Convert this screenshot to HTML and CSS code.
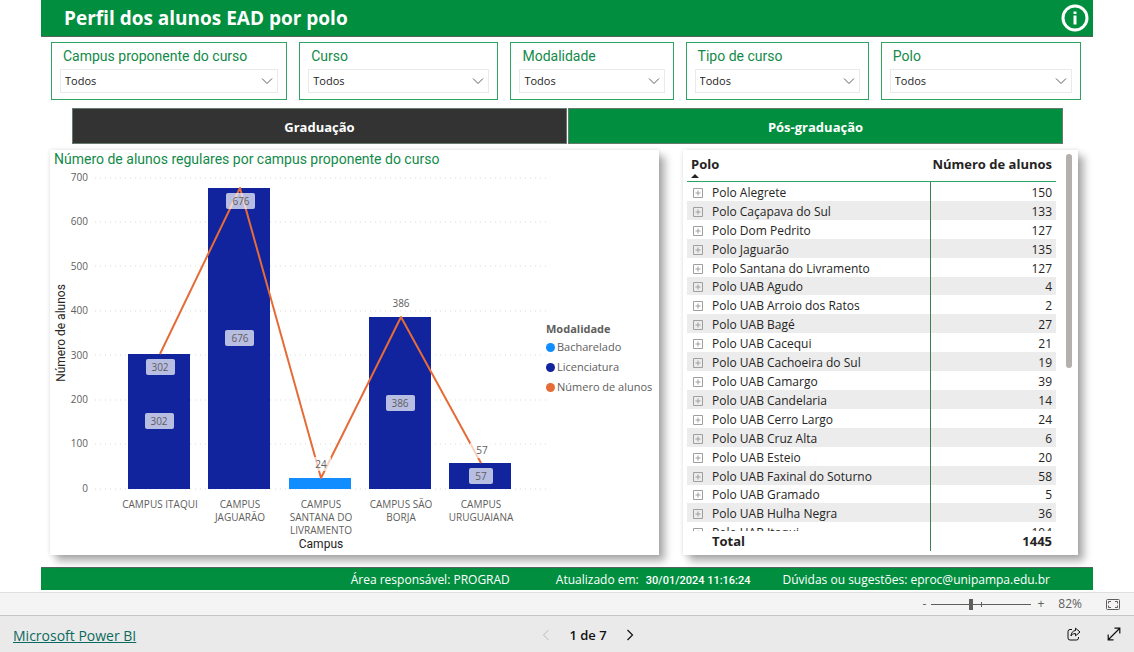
FILE: index.html
```html
<!DOCTYPE html>
<html lang="pt-BR">
<head>
<meta charset="utf-8">
<meta name="viewport" content="width=device-width, initial-scale=1">
<title>Perfil dos alunos EAD por polo</title>
<link rel="stylesheet" href="styles.css">
</head>
<body>
<svg class="sprite" aria-hidden="true">
  <symbol id="chevron" viewBox="0 0 12 8"><path d="M1 1.500 6 6.500 11 1.500" fill="none" stroke="currentColor"/></symbol>
  <symbol id="expand" viewBox="0 0 10 10"><path d="M.5 .5h9v9h-9zM2.500 5h5M5 2.500v5" fill="none" stroke="currentColor"/></symbol>
</svg>
<main class="report">
  <header class="report-header">
    <h1>Perfil dos alunos EAD por polo</h1>
    <button class="info" aria-label="Informações">
      <svg viewBox="0 0 28 28" width="28" height="28"><circle cx="14" cy="14" r="12" fill="none" stroke="#fff" stroke-width="3"/><path d="M12.500 7.500h3v2.500h-3zM12.500 11.500h3v9h-3z" fill="#fff"/></svg>
    </button>
  </header>

  <section class="filters">
    <div class="filter"><label for="campus">Campus proponente do curso</label><div class="pick"><select id="campus"><option>Todos</option></select><svg><use href="#chevron"/></svg></div></div>
    <div class="filter"><label for="curso">Curso</label><div class="pick"><select id="curso"><option>Todos</option></select><svg><use href="#chevron"/></svg></div></div>
    <div class="filter"><label for="modalidade">Modalidade</label><div class="pick"><select id="modalidade"><option>Todos</option></select><svg><use href="#chevron"/></svg></div></div>
    <div class="filter"><label for="tipo">Tipo de curso</label><div class="pick"><select id="tipo"><option>Todos</option></select><svg><use href="#chevron"/></svg></div></div>
    <div class="filter"><label for="polo">Polo</label><div class="pick"><select id="polo"><option>Todos</option></select><svg><use href="#chevron"/></svg></div></div>
  </section>

  <nav class="tabs">
    <button class="tab tab-current">Graduação</button>
    <button class="tab">Pós-graduação</button>
  </nav>

  <div class="panels">
    <section class="card chart-card">
      <h2>Número de alunos regulares por campus proponente do curso</h2>
      <div class="chart-body">
        <svg class="plot" viewBox="0 0 496 386" role="img" aria-label="Número de alunos por campus">
          <g class="grid">
            <path d="M45 10H498M45 54H498M45 98H498M45 143H498M45 187H498M45 232H498M45 276H498M45 321H498"/>
          </g>
          <g class="ticks">
            <text x="38" y="13">700</text><text x="38" y="57">600</text><text x="38" y="102">500</text><text x="38" y="146">400</text>
            <text x="38" y="191">300</text><text x="38" y="235">200</text><text x="38" y="279">100</text><text x="38" y="324">0</text>
          </g>
          <text class="axis-name" transform="translate(15 165) rotate(-90)">Número de alunos</text>
          <g class="bars">
            <rect x="78" y="186" width="62" height="135"/>
            <rect x="158" y="20" width="62" height="301"/>
            <rect class="bacharelado" x="239" y="310" width="62" height="11"/>
            <rect x="319" y="149" width="62" height="172"/>
            <rect x="399" y="295" width="62" height="26"/>
          </g>
          <path class="trend" d="M110 186 190 20 271 310 351 149 431 295"/>
          <g class="pills">
            <rect x="96" y="191" width="29" height="16" rx="2"/><rect x="95" y="245" width="29" height="16" rx="2"/>
            <rect x="176" y="25" width="29" height="16" rx="2"/><rect x="175" y="162" width="29" height="16" rx="2"/>
            <rect x="336" y="227" width="29" height="16" rx="2"/><rect x="419" y="300" width="24" height="16" rx="2"/>
            <rect x="261" y="289" width="20" height="14"/><rect x="420" y="275" width="22" height="15"/>
          </g>
          <g class="values">
            <text x="110" y="203">302</text><text x="109" y="257">302</text><text x="191" y="37">676</text><text x="190" y="174">676</text>
            <text x="271" y="300">24</text><text x="351" y="139">386</text><text x="350" y="239">386</text><text x="432" y="286">57</text><text x="431" y="312">57</text>
          </g>
          <g class="cats">
            <text x="110" y="340">CAMPUS ITAQUI</text>
            <text x="190" y="340">CAMPUS</text><text x="190" y="353">JAGUARÃO</text>
            <text x="271" y="340">CAMPUS</text><text x="271" y="353">SANTANA DO</text><text x="271" y="366">LIVRAMENTO</text>
            <text x="351" y="340">CAMPUS SÃO</text><text x="351" y="353">BORJA</text>
            <text x="431" y="340">CAMPUS</text><text x="431" y="353">URUGUAIANA</text>
          </g>
          <text class="axis-name" x="271" y="380">Campus</text>
        </svg>
        <div class="legend">
          <h3>Modalidade</h3>
          <ul>
            <li><i class="dot dot-bach"></i>Bacharelado</li>
            <li><i class="dot dot-lic"></i>Licenciatura</li>
            <li><i class="dot dot-num"></i>Número de alunos</li>
          </ul>
        </div>
      </div>
    </section>

    <section class="card table-card">
      <div class="table-view">
        <table>
          <thead><tr><th scope="col">Polo<span class="sort"></span></th><th scope="col">Número de alunos</th></tr></thead>
          <tbody>
            <tr><td><button aria-label="Expandir"><svg><use href="#expand"/></svg></button>Polo Alegrete</td><td>150</td></tr>
            <tr><td><button aria-label="Expandir"><svg><use href="#expand"/></svg></button>Polo Caçapava do Sul</td><td>133</td></tr>
            <tr><td><button aria-label="Expandir"><svg><use href="#expand"/></svg></button>Polo Dom Pedrito</td><td>127</td></tr>
            <tr><td><button aria-label="Expandir"><svg><use href="#expand"/></svg></button>Polo Jaguarão</td><td>135</td></tr>
            <tr><td><button aria-label="Expandir"><svg><use href="#expand"/></svg></button>Polo Santana do Livramento</td><td>127</td></tr>
            <tr><td><button aria-label="Expandir"><svg><use href="#expand"/></svg></button>Polo UAB Agudo</td><td>4</td></tr>
            <tr><td><button aria-label="Expandir"><svg><use href="#expand"/></svg></button>Polo UAB Arroio dos Ratos</td><td>2</td></tr>
            <tr><td><button aria-label="Expandir"><svg><use href="#expand"/></svg></button>Polo UAB Bagé</td><td>27</td></tr>
            <tr><td><button aria-label="Expandir"><svg><use href="#expand"/></svg></button>Polo UAB Cacequi</td><td>21</td></tr>
            <tr><td><button aria-label="Expandir"><svg><use href="#expand"/></svg></button>Polo UAB Cachoeira do Sul</td><td>19</td></tr>
            <tr><td><button aria-label="Expandir"><svg><use href="#expand"/></svg></button>Polo UAB Camargo</td><td>39</td></tr>
            <tr><td><button aria-label="Expandir"><svg><use href="#expand"/></svg></button>Polo UAB Candelaria</td><td>14</td></tr>
            <tr><td><button aria-label="Expandir"><svg><use href="#expand"/></svg></button>Polo UAB Cerro Largo</td><td>24</td></tr>
            <tr><td><button aria-label="Expandir"><svg><use href="#expand"/></svg></button>Polo UAB Cruz Alta</td><td>6</td></tr>
            <tr><td><button aria-label="Expandir"><svg><use href="#expand"/></svg></button>Polo UAB Esteio</td><td>20</td></tr>
            <tr><td><button aria-label="Expandir"><svg><use href="#expand"/></svg></button>Polo UAB Faxinal do Soturno</td><td>58</td></tr>
            <tr><td><button aria-label="Expandir"><svg><use href="#expand"/></svg></button>Polo UAB Gramado</td><td>5</td></tr>
            <tr><td><button aria-label="Expandir"><svg><use href="#expand"/></svg></button>Polo UAB Hulha Negra</td><td>36</td></tr>
            <tr><td><button aria-label="Expandir"><svg><use href="#expand"/></svg></button>Polo UAB Itaqui</td><td>104</td></tr>
          </tbody>
          <tfoot><tr><td>Total</td><td>1445</td></tr></tfoot>
        </table>
      </div>
      <div class="scrollbar"></div>
    </section>
  </div>

  <footer class="report-footer">
    <span>Área responsável: PROGRAD</span>
    <span class="updated">Atualizado em: <time datetime="2024-01-30T11:16:24">30/01/2024 11:16:24</time></span>
    <span>Dúvidas ou sugestões: eproc@unipampa.edu.br</span>
  </footer>
</main>

<div class="zoom-bar">
  <button aria-label="Reduzir">-</button>
  <div class="slider"><input type="range" min="10" max="190" value="80" aria-label="Zoom"></div>
  <button aria-label="Ampliar">+</button>
  <span class="percent">82%</span>
  <button class="fit" aria-label="Ajustar à página"><svg width="14" height="11" viewBox="0 0 14 11" fill="none" stroke="#605e5c"><rect x=".5" y=".5" width="13" height="10" rx="1"/><path d="M5 2.500H2.500V4.500M9 2.500h2.500V4.500M5 8.500H2.500V6.500M9 8.500h2.500V6.500"/></svg></button>
</div>

<div class="nav-bar">
  <a href="#">Microsoft Power BI</a>
  <div class="pager">
    <button aria-label="Página anterior" disabled><svg width="8" height="12" viewBox="0 0 8 12"><path d="M6.500 1 1.500 6l5 5" fill="none" stroke="currentColor"/></svg></button>
    <span>1 de 7</span>
    <button aria-label="Próxima página"><svg width="8" height="12" viewBox="0 0 8 12"><path d="M1.500 1l5 5-5 5" fill="none" stroke="currentColor" stroke-width="1.200"/></svg></button>
  </div>
  <div class="actions">
    <button aria-label="Compartilhar"><svg width="14" height="14" viewBox="0 0 14 14" fill="none" stroke="#111"><path d="M5 2.500H3a2 2 0 0 0-2 2V11a2 2 0 0 0 2 2h6.500a2 2 0 0 0 2-2v-1"/><path d="M8.500 1.200 13 5 8.500 8.800V6.600C6.200 6.500 4.800 7.400 4 9c.1-3 1.700-5.200 4.500-5.500z" stroke-linejoin="round"/></svg></button>
    <button aria-label="Tela inteira"><svg width="14" height="14" viewBox="0 0 14 14" fill="none" stroke="#111" stroke-width="1.200"><path d="M1.500 12.500l11-11M7.500 1.200h5.300v5.300M1.200 7.500v5.300h5.300"/></svg></button>
  </div>
</div>
</body>
</html>
```

FILE: styles.css
```css
* { box-sizing: border-box; }

:root {
  --green: #018f3f;
  --line: #2fa362;
  --ui: "Open Sans", "Noto Sans", sans-serif;
  --din: Roboto, "Open Sans", sans-serif;
}

body {
  margin: 0;
  min-height: 100vh;
  display: flex;
  flex-direction: column;
  background: #fff;
  color: #252423;
  font: 12px/18px var(--ui);
}

h1, h2, h3, ul { margin: 0; padding: 0; }
button { padding: 0; border: 0; background: none; color: inherit; font: inherit; }
.sprite { display: none; }

.report { flex: 1; margin: 0 41px; }

.report-header {
  display: flex;
  align-items: center;
  justify-content: space-between;
  height: 37px;
  padding: 0 4px 0 23px;
  border-bottom: 1px solid #56665c;
  background: var(--green);
  color: #fff;
}
.report-header h1 { font-size: 19px; line-height: 24px; }
.info { display: flex; }

.filters {
  display: grid;
  grid-template-columns: 236fr 199fr 163fr 183fr 200fr;
  gap: 12px;
  padding: 5px 12px 0 10px;
}
.filter {
  min-width: 0;
  padding: 3px 8px 6px;
  border: 1px solid var(--line);
}
.filter label {
  display: block;
  padding-left: 3px;
  color: #128a49;
  font: 14px/20px var(--din);
}
.pick {
  display: grid;
  align-items: center;
  margin-top: 3px;
  border: 1px solid #eaeaea;
}
.pick > * { grid-area: 1 / 1; }
.pick select {
  width: 100%;
  height: 22px;
  padding: 0 20px 0 4px;
  border: 0;
  appearance: none;
  background: none;
  color: #252423;
  font: 11px/20px var(--ui);
}
.pick svg {
  justify-self: end;
  width: 12px;
  height: 8px;
  margin-right: 4px;
  color: #605e5c;
  pointer-events: none;
}

.tabs {
  display: grid;
  grid-template-columns: 1fr 1fr;
  gap: 1px;
  margin: 8px 30px 6px 31px;
}
.tab {
  height: 36px;
  padding-top: 1px;
  border: 1px solid #667a6e;
  background: var(--green);
  color: #fff;
  font: 700 13px/18px var(--ui);
}
.tab-current { background: #333; }

.panels {
  display: grid;
  grid-template-columns: 609fr 395fr;
  gap: 24px;
  padding: 0 15px 0 9px;
}
.card {
  background: #fff;
  box-shadow: 0 0 4px rgba(0, 0, 0, .12), 6px 6px 8px rgba(0, 0, 0, .32);
}

.chart-card h2 {
  padding-left: 4px;
  color: #128a49;
  font: 14px/18px var(--din);
}
.chart-body { display: grid; grid-template-columns: 496fr 113fr; }
.plot { display: block; width: 100%; overflow: visible; font: 10px var(--ui); fill: #605e5c; }
.grid path { fill: none; stroke: #d9d9d9; stroke-dasharray: 1 4; }
.ticks text { text-anchor: end; }
.axis-name { text-anchor: middle; font: 12px var(--din); fill: #252423; }
.bars rect { fill: #12239e; }
.bars .bacharelado { fill: #118dff; }
.trend { fill: none; stroke: #e66c37; stroke-width: 2; stroke-linejoin: round; }
.pills rect { fill: #fff; fill-opacity: .7; }
.values text, .cats text { text-anchor: middle; }

.legend { padding-top: 153px; color: #605e5c; font-size: 11px; white-space: nowrap; }
.legend h3 { font-size: 11px; line-height: 16px; }
.legend ul { list-style: none; }
.legend li { display: flex; align-items: center; gap: 2px; height: 20px; }
.dot { width: 9px; height: 9px; border-radius: 50%; }
.dot-bach { background: #118dff; }
.dot-lic { background: #12239e; }
.dot-num { background: #e66c37; }

.table-card { display: flex; gap: 10px; padding: 4px 6px 4px 4px; }
.table-view { flex: 1; height: 397px; overflow: hidden; }
table { width: 100%; table-layout: fixed; border-collapse: separate; border-spacing: 0; font-size: 12px; line-height: 17px; }
th, td { padding: 0 4px; text-align: left; }
th { height: 28px; padding-bottom: 7px; border-bottom: 1px solid var(--line); font-size: 13px; line-height: 20px; white-space: nowrap; vertical-align: top; }
th:first-child { width: 66%; padding-bottom: 0; }
th:last-child, td:last-child { padding-left: 0; text-align: right; }
.sort { display: block; width: 0; height: 0; margin-bottom: 3px; border: 4px solid transparent; border-top: 0; border-bottom-color: #252423; }
tbody td { height: 19px; padding-top: 1px; }
tbody tr:nth-child(11n+6) td { height: 18px; }
tbody tr:nth-child(even) { background: #ececec; }
tbody td:first-child { padding-left: 6px; border-right: 1px solid #3f7d5b; }
tbody button { display: inline-flex; margin-right: 9px; color: #a19f9d; vertical-align: -1px; }
tbody button svg { width: 10px; height: 10px; }
tfoot td { position: sticky; bottom: 0; height: 20px; background: #fff; font-weight: 700; font-size: 13px; }
tfoot td:first-child { padding-left: 25px; border-right: 1px solid #3f7d5b; }
.scrollbar { width: 6px; height: 214px; border-radius: 3px; background: #b3b0ad; }

.report-footer {
  display: flex;
  justify-content: flex-end;
  gap: 32px;
  height: 23px;
  margin-top: 12px;
  padding-right: 43px;
  border-top: 1px solid #56665c;
  background: var(--green);
  color: #fff;
  font-size: 12px;
  line-height: 23px;
}
.updated { margin-left: 14px; }
.updated time { margin-left: 4px; font: 500 11px/23px var(--din); }

.zoom-bar {
  display: flex;
  align-items: center;
  justify-content: flex-end;
  height: 24px;
  padding-right: 14px;
  border-top: 1px solid #e1dfdd;
  border-bottom: 1px solid #c8c6c4;
  background: #f4f4f4;
  color: #605e5c;
}
.slider { display: flex; width: 100px; margin: 0 6px 0 5px; background: linear-gradient(#605e5c, #605e5c) 50% 50% / 1px 5px no-repeat; }
.slider input { width: 100%; height: 11px; margin: 0; appearance: none; background: linear-gradient(#605e5c, #605e5c) 0 50% / 100% 1px no-repeat; }
.slider input::-webkit-slider-thumb { width: 4px; height: 11px; appearance: none; background: #605e5c; }
.percent { margin: 0 24px 0 14px; }
.fit { display: flex; }

.nav-bar {
  display: grid;
  grid-template-columns: 1fr auto 1fr;
  align-items: center;
  height: 36px;
  padding: 0 13px;
  background: #eaeaea;
  color: #111;
}
.nav-bar a { justify-self: start; margin-top: 4px; color: #0b6a60; font-size: 14px; line-height: 18px; }
.pager { display: flex; align-items: center; gap: 19px; margin: 2px 0 0 42px; font-weight: 600; font-size: 13px; }
.pager button { display: flex; }
.pager button:disabled { color: #bbb; }
.actions { display: flex; justify-content: flex-end; gap: 26px; }
.actions button { display: flex; }
```
